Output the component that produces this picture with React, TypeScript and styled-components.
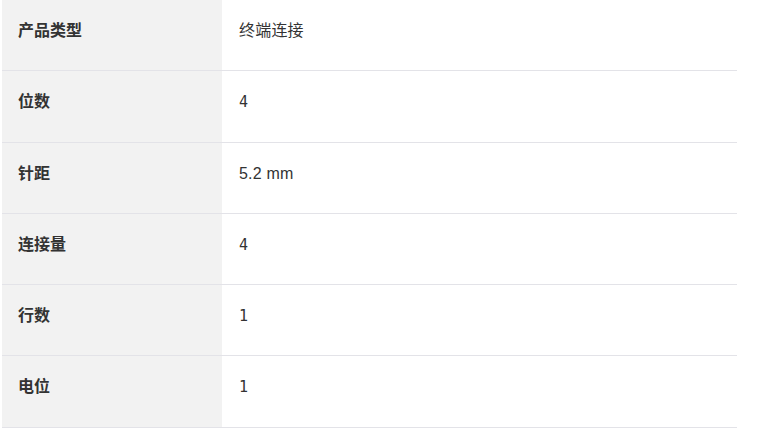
import React from "react";
import styled, { createGlobalStyle } from "styled-components";

const Global = createGlobalStyle`
  html, body { margin: 0; padding: 0; background: #fff; }
  body { font-family: "Liberation Sans", "Noto Sans CJK SC", sans-serif; }
`;

const Page = styled.div`
  padding: 0 0 0 2px;
`;

const Table = styled.div`
  width: 735px;
  display: flex;
  flex-direction: column;
`;

const Row = styled.div`
  display: grid;
  grid-template-columns: 220px 1fr;
  height: 71.3px;
  border-bottom: 1px solid #e3e3e8;
  box-sizing: border-box;
`;

const Label = styled.div`
  background: #f2f2f2;
  padding: 20px 0 0 16px;
  font-size: 16px;
  line-height: 22px;
  font-weight: 700;
  color: #333;
`;

const Value = styled.div<{ $mono?: boolean }>`
  padding: 20px 0 0 17px;
  font-size: ${(p) => (p.$mono ? "15px" : "16px")};
  line-height: 22px;
  color: #333;
  letter-spacing: ${(p) => (p.$mono ? "0" : "0.2px")};
  font-family: ${(p) =>
    p.$mono
      ? '"DejaVu Sans Mono", "Liberation Mono", monospace'
      : '"Liberation Sans", "Noto Sans CJK SC", sans-serif'};
`;

const rows: { label: string; value: string; mono?: boolean }[] = [
  { label: "产品类型", value: "终端连接" },
  { label: "位数", value: "4", mono: true },
  { label: "针距", value: "5.2 mm" },
  { label: "连接量", value: "4", mono: true },
  { label: "行数", value: "1", mono: true },
  { label: "电位", value: "1", mono: true },
];

export default function App() {
  return (
    <Page>
      <Global />
      <Table>
        {rows.map((r) => (
          <Row key={r.label}>
            <Label>{r.label}</Label>
            <Value $mono={r.mono}>{r.value}</Value>
          </Row>
        ))}
      </Table>
    </Page>
  );
}
